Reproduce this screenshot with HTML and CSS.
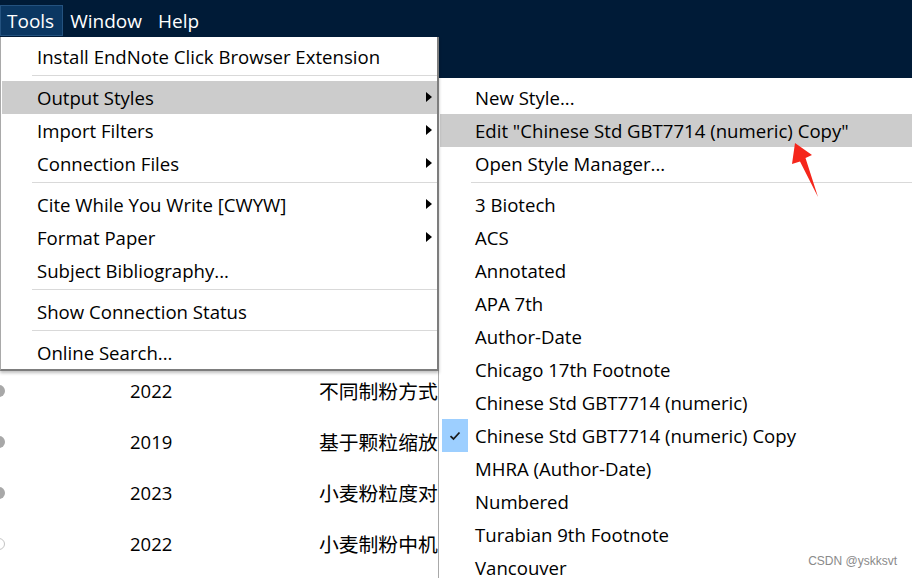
FILE: index.html
```html
<!DOCTYPE html>
<html lang="en">
<head>
    <meta charset="UTF-8">
    <title>EndNote - Tools menu</title>
    <link rel="stylesheet" href="styles.css">
</head>
<body>
    <div class="top">
        <div class="menubar">
            <span class="bar-item active">Tools</span>
            <span class="bar-item">Window</span>
            <span class="bar-item">Help</span>
        </div>
    </div>

    <div class="library">
        <div class="ref-row"><span class="dot"></span><span class="year">2022</span><span class="title">不同制粉方式</span></div>
        <div class="ref-row"><span class="dot"></span><span class="year">2019</span><span class="title">基于颗粒缩放</span></div>
        <div class="ref-row"><span class="dot"></span><span class="year">2023</span><span class="title">小麦粉粒度对</span></div>
        <div class="ref-row"><span class="dot empty"></span><span class="year">2022</span><span class="title">小麦制粉中机</span></div>
    </div>

    <!-- Tools dropdown -->
    <div class="menu tools-menu">
        <div class="item">Install EndNote Click Browser Extension</div>
        <div class="sep"></div>
        <div class="item sub hover">Output Styles</div>
        <div class="item sub">Import Filters</div>
        <div class="item sub">Connection Files</div>
        <div class="sep"></div>
        <div class="item sub">Cite While You Write [CWYW]</div>
        <div class="item sub">Format Paper</div>
        <div class="item">Subject Bibliography...</div>
        <div class="sep"></div>
        <div class="item">Show Connection Status</div>
        <div class="sep"></div>
        <div class="item">Online Search...</div>
    </div>

    <!-- Output Styles submenu -->
    <div class="menu styles-menu">
        <div class="item">New Style...</div>
        <div class="item hover">Edit "Chinese Std GBT7714 (numeric) Copy"</div>
        <div class="item">Open Style Manager...</div>
        <div class="sep"></div>
        <div class="item">3 Biotech</div>
        <div class="item">ACS</div>
        <div class="item">Annotated</div>
        <div class="item">APA 7th</div>
        <div class="item">Author-Date</div>
        <div class="item">Chicago 17th Footnote</div>
        <div class="item">Chinese Std GBT7714 (numeric)</div>
        <div class="item checked">
            <span class="check">
                <svg width="12" height="10" viewBox="0 0 12 10"><path d="M1.5 5.2 L4.5 8 L10.5 1.5" fill="none" stroke="#1a1a1a" stroke-width="1.8"/></svg>
            </span>
            Chinese Std GBT7714 (numeric) Copy
        </div>
        <div class="item">MHRA (Author-Date)</div>
        <div class="item">Numbered</div>
        <div class="item">Turabian 9th Footnote</div>
        <div class="item">Vancouver</div>
    </div>

    <svg class="arrow" width="912" height="578" viewBox="0 0 912 578">
        <polygon points="795,143 812,155 805.5,158 818,197 800,161.5 792,164" fill="#f5261b"/>
    </svg>

    <div class="watermark">CSDN @yskksvt</div>
</body>
</html>
```

FILE: styles.css
```css
body {
    margin: 0;
    width: 912px;
    height: 578px;
    overflow: hidden;
    position: relative;
    background: #fff;
    font-family: "Open Sans", "Noto Sans CJK SC", sans-serif;
    font-size: 18.6px;
    color: #000;
}

.top {
    height: 78px;
    background: #001b37;
}

.menubar {
    height: 37px;
    display: flex;
    align-items: flex-start;
    padding-top: 5px;
    box-sizing: border-box;
}

.bar-item {
    color: #fff;
    font-size: 19px;
    height: 31px;
    line-height: 30px;
    padding: 0 8px 0 6px;
    box-sizing: border-box;
    border: 1px solid transparent;
}

.bar-item.active {
    background: #0b3762;
    border-color: #24527f;
}

/* library list behind the menus */
.library {
    padding-top: 365px;
    margin-top: -78px;
}

.ref-row {
    height: 51px;
    display: flex;
    align-items: center;
    font-size: 18.5px;
}

.dot {
    width: 12px;
    height: 12px;
    border-radius: 50%;
    background: #a8a8a8;
    margin-left: -7px;
}

.dot.empty {
    background: #fff;
    border: 1px solid #c4c4c4;
    width: 10px;
    height: 10px;
}

.year {
    margin-left: 125px;
    width: 189px;
}

.title {
    width: 119px;
    overflow: hidden;
    white-space: nowrap;
    font-family: "Noto Sans CJK SC", sans-serif;
    font-size: 19.8px;
}

/* menus */
.menu {
    position: absolute;
    background: #fff;
    box-sizing: border-box;
}

.tools-menu {
    left: 0;
    top: 37px;
    width: 439px;
    height: 334px;
    padding: 3px 0 1px 1px;
    border-left: 1px solid #a9a9a9;
    border-right: 2px solid #7d7d7d;
    border-bottom: 2px solid #7d7d7d;
    box-shadow: 0 2px 3px rgba(0, 0, 0, 0.25);
    z-index: 2;
}

.styles-menu {
    left: 438px;
    top: 78px;
    width: 474px;
    height: 510px;
    padding: 3px 0 0 1px;
    border-left: 1px solid #a9a9a9;
    z-index: 1;
}

.item {
    height: 33px;
    line-height: 33px;
    padding-left: 35px;
    position: relative;
    white-space: nowrap;
}

.item.hover {
    background: #cccccc;
}

.item.sub::after {
    content: "";
    position: absolute;
    left: 424px;
    top: 11px;
    border-left: 6px solid #000;
    border-top: 5px solid transparent;
    border-bottom: 5px solid transparent;
}

.sep {
    height: 1px;
    background: #d9d9d9;
    margin: 2px 0 5px 30px;
}

.styles-menu .sep {
    margin-left: 31px;
}

.check {
    position: absolute;
    left: 2px;
    top: 0;
    width: 26px;
    height: 33px;
    background: #9dcfff;
    display: flex;
    align-items: center;
    justify-content: center;
}

.arrow {
    position: absolute;
    left: 0;
    top: 0;
    pointer-events: none;
    z-index: 3;
}

.watermark {
    position: absolute;
    right: 15px;
    bottom: 10px;
    font-family: "Liberation Sans", Arial, sans-serif;
    font-size: 12px;
    color: #8a8a8a;
    z-index: 3;
}
```
